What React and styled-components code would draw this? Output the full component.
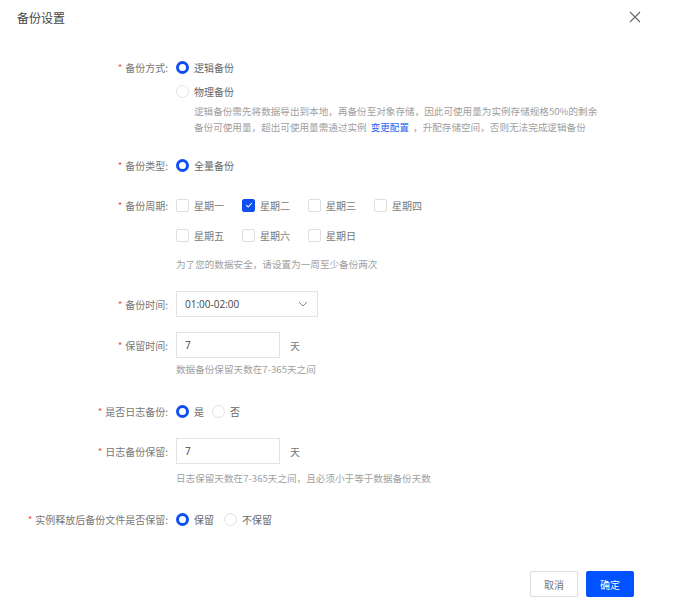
import React from "react";
import styled, { createGlobalStyle } from "styled-components";

const GlobalStyle = createGlobalStyle`
  body {
    margin: 0;
    background: #fff;
    font-family: "Noto Sans CJK SC", "Noto Sans", sans-serif;
  }
`;

const Dialog = styled.div`
  width: 675px;
  height: 602px;
  box-sizing: border-box;
  display: flex;
  flex-direction: column;
  background: #fff;
`;

const Header = styled.div`
  display: flex;
  align-items: center;
  justify-content: space-between;
  height: 34px;
  padding: 0 34px 0 17px;
`;

const Title = styled.div`
  font-size: 12px;
  color: #444;
`;

const CloseButton = styled.button`
  border: none;
  background: none;
  padding: 0;
  display: flex;
  cursor: pointer;
`;

const Form = styled.div`
  display: flex;
  flex-direction: column;
  padding-top: 21px;
  flex: 1;
`;

const Item = styled.div`
  display: grid;
  grid-template-columns: 168px 1fr;
  column-gap: 8px;
  margin-top: ${(p) => p.$gap || 0}px;
`;

const Label = styled.div`
  height: ${(p) => p.$h || 24}px;
  display: flex;
  align-items: center;
  justify-content: flex-end;
  font-size: 10px;
  color: #777;
  white-space: nowrap;
`;

const Star = styled.span`
  color: #f0443c;
  margin-right: 3px;
  font-size: 9px;
`;

const Control = styled.div`
  display: flex;
  flex-direction: column;
`;

const Row = styled.div`
  display: flex;
  align-items: center;
  height: ${(p) => p.$h || 24}px;
`;

const RadioOption = styled.label`
  display: flex;
  align-items: center;
  gap: 5px;
  font-size: 10px;
  color: #666;
  margin-right: ${(p) => p.$mr || 0}px;
`;

const RadioDot = styled.span`
  width: 13px;
  height: 13px;
  border-radius: 50%;
  box-sizing: border-box;
  border: ${(p) => (p.$on ? "3.5px solid #0f4ef0" : "1px solid #e2e2e2")};
  background: #fff;
`;

const Desc = styled.div`
  font-size: 9.6px;
  line-height: 16px;
  color: #a0a0a0;
  padding-left: ${(p) => p.$indent || 0}px;
  margin-top: ${(p) => p.$mt || 0}px;
  white-space: nowrap;
`;

const Link = styled.a`
  color: #1f5ff0;
  text-decoration: none;
  margin: 0 4px;
`;

const CheckGrid = styled.div`
  display: grid;
  grid-template-columns: repeat(4, 66px);
  row-gap: 6px;
`;

const CheckOption = styled.label`
  display: flex;
  align-items: center;
  gap: 5px;
  height: 24px;
  font-size: 10px;
  color: #777;
`;

const CheckBox = styled.span`
  width: 13px;
  height: 13px;
  box-sizing: border-box;
  border-radius: 2px;
  border: 1px solid ${(p) => (p.$on ? "#0f4ef0" : "#dedede")};
  background: ${(p) => (p.$on ? "#0f4ef0" : "#fff")};
  display: flex;
  align-items: center;
  justify-content: center;
`;

const Select = styled.div`
  width: 142px;
  height: 26px;
  box-sizing: border-box;
  border: 1px solid #e3e3e3;
  display: flex;
  align-items: center;
  justify-content: space-between;
  padding: 0 9px 0 8px;
  font-size: 10px;
  color: #444;
  font-family: "Open Sans", "Noto Sans", sans-serif;
`;

const Input = styled.div`
  width: 104px;
  height: 26px;
  box-sizing: border-box;
  border: 1px solid #e3e3e3;
  display: flex;
  align-items: center;
  padding: 0 8px;
  font-size: 10px;
  color: #444;
  font-family: "Open Sans", "Noto Sans", sans-serif;
`;

const Unit = styled.span`
  font-size: 10px;
  color: #777;
  margin-left: 10px;
`;

const Footer = styled.div`
  display: flex;
  justify-content: flex-end;
  gap: 8px;
  padding: 0 41px 5px 0;
`;

const Button = styled.button`
  width: 48px;
  height: 26px;
  box-sizing: border-box;
  font-size: 10px;
  font-family: inherit;
  border-radius: 2px;
  border: 1px solid ${(p) => (p.$primary ? "#0052ff" : "#dedede")};
  background: ${(p) => (p.$primary ? "#0052ff" : "#fff")};
  color: ${(p) => (p.$primary ? "#fff" : "#777")};
  cursor: pointer;
`;

const Radio = ({ on, children, mr }) => (
  <RadioOption $mr={mr}>
    <RadioDot $on={on} />
    {children}
  </RadioOption>
);

const Check = ({ on, children }) => (
  <CheckOption>
    <CheckBox $on={on}>
      {on && (
        <svg width="8" height="8" viewBox="0 0 8 8">
          <path d="M1.2 4.2 L3.2 6 L6.8 2" stroke="#fff" strokeWidth="1.1" fill="none" />
        </svg>
      )}
    </CheckBox>
    {children}
  </CheckOption>
);

const FieldLabel = ({ h, children }) => (
  <Label $h={h}>
    <Star>*</Star>
    {children}
  </Label>
);

const days = [
  ["星期一", false],
  ["星期二", true],
  ["星期三", false],
  ["星期四", false],
  ["星期五", false],
  ["星期六", false],
  ["星期日", false],
];

export default function App() {
  return (
    <>
      <GlobalStyle />
      <Dialog>
        <Header>
          <Title>备份设置</Title>
          <CloseButton>
            <svg width="12" height="12" viewBox="0 0 12 12">
              <path d="M1 1 L11 11 M11 1 L1 11" stroke="#666" strokeWidth="1.1" />
            </svg>
          </CloseButton>
        </Header>
        <Form>
          <Item>
            <FieldLabel>备份方式:</FieldLabel>
            <Control>
              <Row>
                <Radio on>逻辑备份</Radio>
              </Row>
              <Row>
                <Radio>物理备份</Radio>
              </Row>
              <Desc $indent={18}>
                逻辑备份需先将数据导出到本地，再备份至对象存储，因此可使用量为实例存储规格50%的剩余
              </Desc>
              <Desc $indent={18}>
                备份可使用量，超出可使用量需通过实例<Link>变更配置</Link>，升配存储空间，否则无法完成逻辑备份
              </Desc>
            </Control>
          </Item>

          <Item $gap={18}>
            <FieldLabel>备份类型:</FieldLabel>
            <Control>
              <Row>
                <Radio on>全量备份</Radio>
              </Row>
            </Control>
          </Item>

          <Item $gap={16}>
            <FieldLabel>备份周期:</FieldLabel>
            <Control>
              <CheckGrid>
                {days.map(([d, on]) => (
                  <Check key={d} on={on}>
                    {d}
                  </Check>
                ))}
              </CheckGrid>
              <Desc $mt={9}>为了您的数据安全，请设置为一周至少备份两次</Desc>
            </Control>
          </Item>

          <Item $gap={19}>
            <FieldLabel h={26}>备份时间:</FieldLabel>
            <Control>
              <Select>
                01:00-02:00
                <svg width="10" height="6" viewBox="0 0 10 6">
                  <path d="M1 1 L5 5 L9 1" stroke="#888" strokeWidth="1" fill="none" />
                </svg>
              </Select>
            </Control>
          </Item>

          <Item $gap={15}>
            <FieldLabel h={26}>保留时间:</FieldLabel>
            <Control>
              <Row $h={26}>
                <Input>7</Input>
                <Unit>天</Unit>
              </Row>
              <Desc $mt={3}>数据备份保留天数在7-365天之间</Desc>
            </Control>
          </Item>

          <Item $gap={22}>
            <FieldLabel>是否日志备份:</FieldLabel>
            <Control>
              <Row>
                <Radio on mr={8}>是</Radio>
                <Radio>否</Radio>
              </Row>
            </Control>
          </Item>

          <Item $gap={15}>
            <FieldLabel h={26}>日志备份保留:</FieldLabel>
            <Control>
              <Row $h={26}>
                <Input>7</Input>
                <Unit>天</Unit>
              </Row>
              <Desc $mt={6}>日志保留天数在7-365天之间，且必须小于等于数据备份天数</Desc>
            </Control>
          </Item>

          <Item $gap={21}>
            <FieldLabel>实例释放后备份文件是否保留:</FieldLabel>
            <Control>
              <Row>
                <Radio on mr={10}>保留</Radio>
                <Radio>不保留</Radio>
              </Row>
            </Control>
          </Item>
        </Form>
        <Footer>
          <Button>取消</Button>
          <Button $primary>确定</Button>
        </Footer>
      </Dialog>
    </>
  );
}
